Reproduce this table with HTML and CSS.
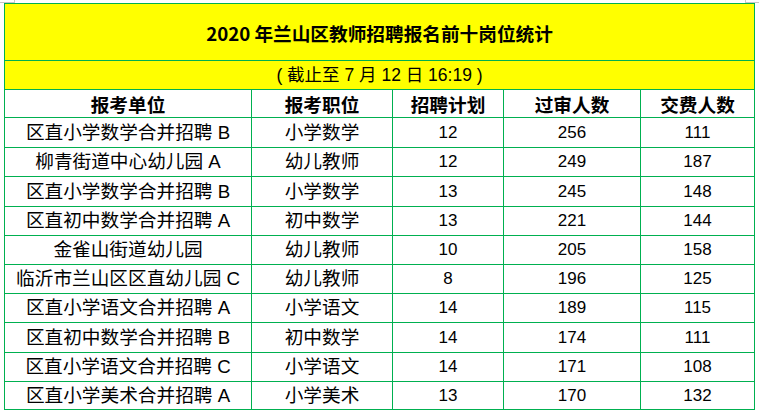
FILE: index.html
```html
<!DOCTYPE html>
<html lang="zh-CN">
<head>
<meta charset="utf-8">
<title>2020 年兰山区教师招聘报名前十岗位统计</title>
<link rel="stylesheet" href="styles.css">
</head>
<body>
<div class="sheet">
  <span class="mark mark-left"></span>
  <span class="mark mark-right"></span>
  <table class="stats">
    <colgroup>
      <col class="c1"><col class="c2"><col class="c3"><col class="c4"><col class="c5">
    </colgroup>
    <tr class="title-row"><td colspan="5">2020 年兰山区教师招聘报名前十岗位统计</td></tr>
    <tr class="sub-row"><td colspan="5">( 截止至 7 月 12 日 16:19 )</td></tr>
    <tr class="head-row"><th>报考单位</th><th>报考职位</th><th>招聘计划</th><th>过审人数</th><th>交费人数</th></tr>
    <tr class="r30"><td>区直小学数学合并招聘 B</td><td>小学数学</td><td>12</td><td>256</td><td>111</td></tr>
    <tr><td>柳青街道中心幼儿园 A</td><td>幼儿教师</td><td>12</td><td>249</td><td>187</td></tr>
    <tr class="r30"><td>区直小学数学合并招聘 B</td><td>小学数学</td><td>13</td><td>245</td><td>148</td></tr>
    <tr><td>区直初中数学合并招聘 A</td><td>初中数学</td><td>13</td><td>221</td><td>144</td></tr>
    <tr><td>金雀山街道幼儿园</td><td>幼儿教师</td><td>10</td><td>205</td><td>158</td></tr>
    <tr><td>临沂市兰山区区直幼儿园 C</td><td>幼儿教师</td><td>8</td><td>196</td><td>125</td></tr>
    <tr><td>区直小学语文合并招聘 A</td><td>小学语文</td><td>14</td><td>189</td><td>115</td></tr>
    <tr class="r30"><td>区直初中数学合并招聘 B</td><td>初中数学</td><td>14</td><td>174</td><td>111</td></tr>
    <tr><td>区直小学语文合并招聘 C</td><td>小学语文</td><td>14</td><td>171</td><td>108</td></tr>
    <tr class="r28"><td>区直小学美术合并招聘 A</td><td>小学美术</td><td>13</td><td>170</td><td>132</td></tr>
  </table>
</div>
</body>
</html>
```

FILE: styles.css
```css
html, body {
  margin: 0;
  padding: 0;
  background: #ffffff;
}

.sheet {
  position: relative;
  width: 759px;
  height: 415px;
  padding: 3px 0 0 4px;
  box-sizing: border-box;
}

.mark {
  position: absolute;
  top: 0;
  width: 14px;
  height: 2px;
  border-bottom: 1px solid #c6c6c6;
}

.mark-left {
  left: 0;
  border-right: 1px solid #c6c6c6;
}

.mark-right {
  left: 745px;
  border-left: 1px solid #c6c6c6;
}

.stats {
  border-collapse: collapse;
  table-layout: fixed;
  width: 751px;
  font-family: "Liberation Sans", "Noto Sans CJK SC", sans-serif;
  color: #000;
}

.c1 { width: 247px; }
.c2 { width: 141px; }
.c3 { width: 111px; }
.c4 { width: 137px; }
.c5 { width: 114px; }

.stats td,
.stats th {
  border: 1px solid #00b050;
  padding: 0;
  text-align: center;
  vertical-align: middle;
  font-size: 17px;
  font-weight: 400;
  line-height: 20px;
  white-space: nowrap;
  height: 28px;
}

.stats td:nth-child(1),
.stats td:nth-child(2) {
  font-size: 18.67px;
}

.stats tr.r30 td { height: 29px; }
.stats tr.r28 td { height: 27px; }

.title-row td {
  background: #ffff00;
  height: 54px;
  font-family: "Noto Sans CJK SC", sans-serif;
  font-weight: 700;
  font-size: 18.67px;
  padding-top: 2px;
}

.sub-row td,
.stats .sub-row td:nth-child(1) {
  background: #ffff00;
  height: 28px;
  font-size: 17.5px;
}

.head-row th {
  height: 27px;
  font-family: "Noto Sans CJK SC", sans-serif;
  font-weight: 700;
  font-size: 18.67px;
}
```
